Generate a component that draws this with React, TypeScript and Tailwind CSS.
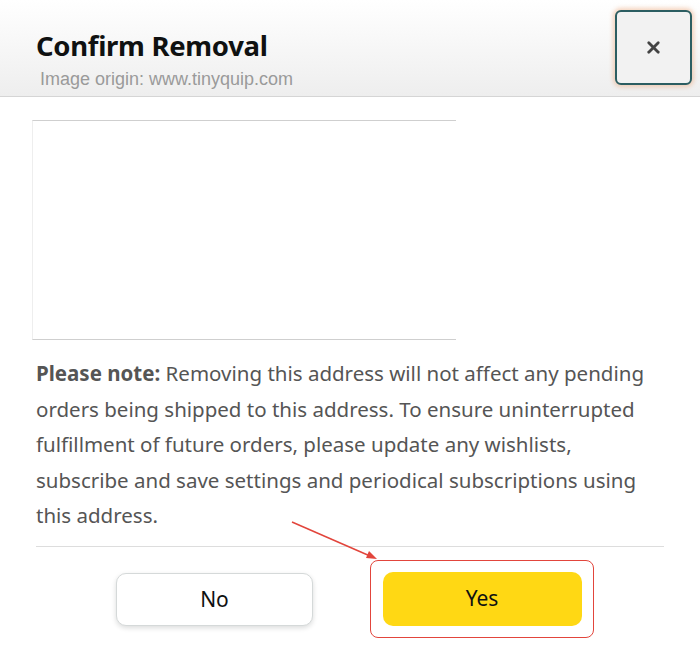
import { X } from 'lucide-react';

export default function App() {
  return (
    <div className="w-[700px] h-[652px] bg-white overflow-hidden relative" style={{ fontFamily: '"Noto Sans", "Open Sans", sans-serif' }}>
      {/* Header */}
      <div className="h-[97px] bg-gradient-to-b from-white to-[#eeeeee] border-b border-[#d5d5d5] flex items-start justify-between pl-9 pr-2">
        <div className="pt-[27px]">
          <h1 className="text-[27.5px] leading-[38px] font-bold text-[#0f1111] tracking-[-0.3px]">Confirm Removal</h1>
          <p className="text-[18px] leading-[22px] text-[#9a9a9a] pl-1 mt-[3px]" style={{ fontFamily: '"Liberation Sans", Arial, sans-serif' }}>
            Image origin: www.tinyquip.com
          </p>
        </div>
        <button className="mt-[10px] w-[77px] h-[75px] rounded-[6px] border-2 border-[#2c5e62] bg-[#f2f2f2] flex items-center justify-center shadow-[0_0_4px_2px_rgba(236,160,110,0.45)]">
          <X className="w-[19px] h-[19px] text-[#444]" strokeWidth={3.5} />
        </button>
      </div>

      {/* Image placeholder */}
      <div className="mt-[23px] ml-8 w-[424px] h-[220px] border-t border-b border-[#cfcfcf] border-l border-l-[#eeeeee] bg-white" />

      {/* Note */}
      <p className="mt-[16px] ml-9 w-[624px] text-[20.5px] leading-[35.5px] text-[#555555]">
        <span className="font-bold">Please note:</span> Removing this address will not affect any pending orders being shipped to this address. To ensure uninterrupted fulfillment of future orders, please update any wishlists, subscribe and save settings and periodical subscriptions using this address.
      </p>

      <div className="mx-9 mt-[12px] border-t border-[#dddddd]" />

      {/* Buttons */}
      <div className="flex items-center mt-[13px]">
        <div className="ml-[116px] mt-[2px] w-[197px] h-[53px] rounded-[10px] border border-[#d5d9d9] bg-white shadow-[0_2px_5px_rgba(15,17,17,0.15)] flex items-center justify-center text-[21px] text-[#0f1111]">
          No
        </div>
        <div className="ml-[57px] w-[224px] h-[78px] rounded-[8px] border-[1.5px] border-[#e2453c] flex items-center justify-center">
          <div className="w-[199px] h-[54px] rounded-[10px] bg-[#ffd814] flex items-center justify-center text-[21px] text-[#0f1111]">
            Yes
          </div>
        </div>
      </div>

      {/* Annotation arrow */}
      <svg className="absolute left-0 top-0 pointer-events-none" width="700" height="652">
        <line x1="292" y1="522" x2="370" y2="556" stroke="#e2453c" strokeWidth="1.5" />
        <polygon points="377,559 366,558 369,551" fill="#e2453c" />
      </svg>
    </div>
  );
}
